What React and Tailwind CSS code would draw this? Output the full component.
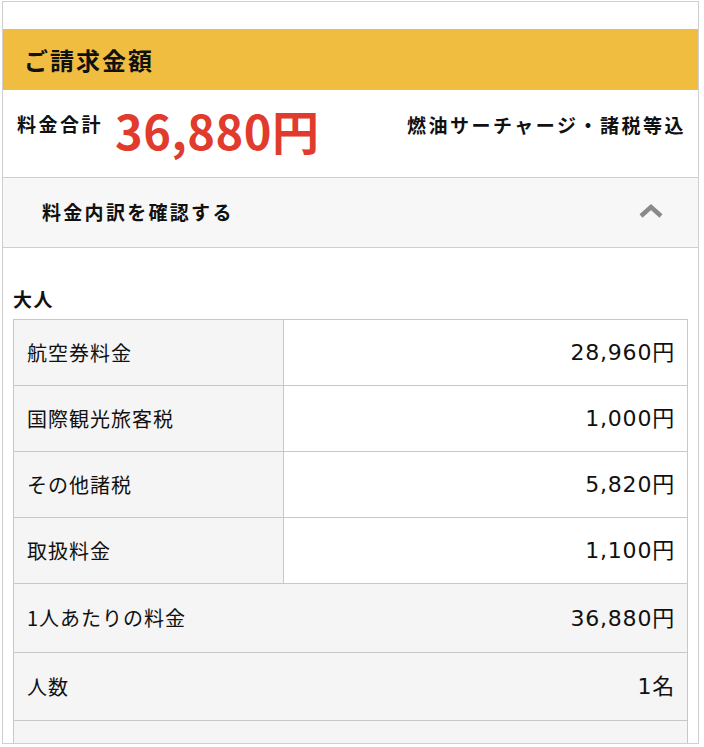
export default function App() {
  const font = { fontFamily: '"Noto Sans CJK JP", "Noto Sans", sans-serif' };
  const num = { fontFamily: '"DejaVu Sans", "Noto Sans CJK JP", sans-serif' };
  const rows = [
    { label: "航空券料金", value: "28,960円", split: true, h: "h-[66px]" },
    { label: "国際観光旅客税", value: "1,000円", split: true, h: "h-[66px]" },
    { label: "その他諸税", value: "5,820円", split: true, h: "h-[66px]" },
    { label: "取扱料金", value: "1,100円", split: true, h: "h-[66px]" },
    { label: "1人あたりの料金", value: "36,880円", split: false, h: "h-[69px]" },
    { label: "人数", value: "1名", split: false, h: "h-[68px]" },
    { label: "", value: "", split: false, h: "h-[68px]" },
  ];
  return (
    <div className="w-[704px] h-[747px] bg-white pt-[1px] pl-[2px]" style={font}>
      <div className="w-[697px] h-[743px] border border-[#cfcfcf] overflow-hidden text-[#111]">
        <div className="h-[27px]" />
        <div className="h-[61px] bg-[#f0bd40] flex items-center pl-[21px]">
          <span className="text-[24px] font-bold tracking-[2px] leading-none">ご請求金額</span>
        </div>
        <div className="h-[88px] border-b border-[#cfcfcf] flex items-start justify-between pl-[14px] pr-[12px]">
          <div className="flex items-start pt-[20px]">
            <span className="text-[19px] font-bold tracking-[2.5px] leading-[32px] mt-[-2px]">料金合計</span>
            <span className="text-[47px] font-bold text-[#e13b2e] leading-[52px] ml-[12px] tracking-[0.5px] mt-[-6px]">36,880円</span>
          </div>
          <div className="pt-[22px] text-[19px] font-bold tracking-[2.5px] leading-[26px]">燃油サーチャージ・諸税等込</div>
        </div>
        <div className="h-[70px] bg-[#f7f7f7] border-b border-[#cfcfcf] flex items-center justify-between pl-[39px] pr-[34px]">
          <span className="text-[19px] font-bold tracking-[2.3px]">料金内訳を確認する</span>
          <svg width="26" height="16" viewBox="0 0 26 16" className="mt-[-4px]">
            <polyline points="3,13 13,4 23,13" fill="none" stroke="#8a8a8a" strokeWidth="4.5" strokeLinejoin="miter" strokeLinecap="butt" />
          </svg>
        </div>
        <div className="px-[10px]">
          <div className="h-[71px] flex items-end pb-[11px]">
            <span className="text-[19px] font-bold tracking-[1.5px] leading-none">大人</span>
          </div>
          <div className="border-t border-l border-r border-[#c8c8c8]">
            {rows.map((r, i) => (
              <div key={i} className={`flex border-b border-[#c8c8c8] ${r.h} ${r.split ? "" : "bg-[#f5f5f5]"}`}>
                <div className={`${r.split ? "w-[270px] border-r border-[#c8c8c8] bg-[#f5f5f5]" : "flex-1"} flex items-center pl-[13px] text-[20px] tracking-[1px]`}>
                  {r.label}
                </div>
                <div className={`${r.split ? "flex-1 bg-white" : ""} flex items-center justify-end pr-[12px] text-[22px] tracking-[0.8px]`} style={num}>
                  {r.value}
                </div>
              </div>
            ))}
          </div>
        </div>
      </div>
    </div>
  );
}
